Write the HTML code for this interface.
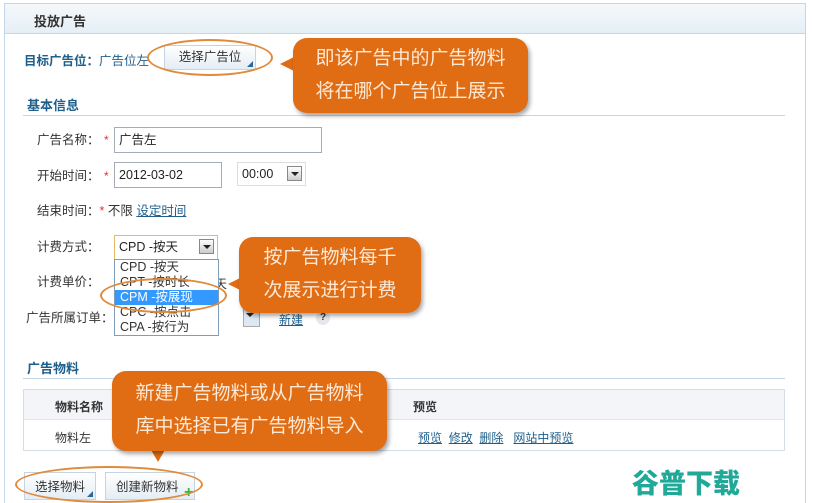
<!DOCTYPE html>
<html style="overflow:hidden;height:503px"><head><meta charset="utf-8"><style>
*{margin:0;padding:0;box-sizing:border-box}
body{width:813px;height:503px;background:#fff;position:relative;overflow:hidden;font-family:"Liberation Sans","Noto Sans CJK SC",sans-serif;font-size:12px;color:#333}
.a{position:absolute}
.panel{left:4px;top:3px;width:802px;height:500px;border:1px solid #c5d7e6;border-bottom:none}
.hdr{left:5px;top:4px;width:800px;height:30px;background:linear-gradient(#f4f8fb,#e6eff6);border-bottom:1px solid #c5d7e6}
.b{font-weight:bold}
.blue{color:#1f5f8b}
.sec{height:22px;border-bottom:1px solid #c5d7e6;font-weight:bold;color:#1f5f8b;padding:1px 0 0 4px;font-size:13px}
.lbl{font-size:12.5px;color:#333;line-height:16px}
.star{color:#d33}
.inp{border:1px solid #a5acb5;background:#fff;padding:0 4px;font-size:12.5px;color:#222}
.btn{border:1px solid #c7d3de;background:linear-gradient(#fff,#e4edf5);font-size:12.5px;text-align:center;color:#333}
.tri{position:absolute;right:2px;bottom:2px;width:0;height:0;border-left:6px solid transparent;border-bottom:6px solid #2a6a9a}
.arrow{width:15px;height:15px;border:1px solid #888;background:linear-gradient(#fff,#ccc)}
.arrow:after{content:"";position:absolute;left:3px;top:5px;border-left:4px solid transparent;border-right:4px solid transparent;border-top:4px solid #222}
.bub{background:#e06c14;border-radius:14px;color:#fde9d6;font-size:19px;line-height:33px;text-align:center;box-shadow:2px 3px 4px rgba(0,0,0,.35)}
.ell{border:2px solid #e08a3a;border-radius:50%}
a{color:#1f5f8b;text-decoration:underline}
</style></head><body>
<div class="a panel"></div>
<div class="a hdr"></div>
<div class="a b" style="left:34px;top:11px;font-size:13px">投放广告</div>
<div class="a b blue" style="left:24px;top:50px;font-size:12.5px">目标广告位：<span style="font-weight:normal">广告位左</span></div>
<div class="a btn" style="left:164px;top:45px;width:92px;height:25px;line-height:23px">选择广告位<span class="tri"></span></div>
<div class="a ell" style="left:147px;top:39px;width:126px;height:37px"></div>

<div class="a sec" style="left:23px;top:94px;width:762px">基本信息</div>
<div class="a lbl" style="left:37px;top:132px">广告名称：</div><div class="a star" style="left:104px;top:133px">*</div>
<div class="a inp" style="left:114px;top:127px;width:208px;height:26px;line-height:24px">广告左</div>
<div class="a lbl" style="left:37px;top:168px">开始时间：</div><div class="a star" style="left:104px;top:169px">*</div>
<div class="a inp" style="left:114px;top:162px;width:108px;height:26px;line-height:24px">2012-03-02</div>
<div class="a inp" style="left:237px;top:162px;width:69px;height:24px;line-height:22px;border-color:#ddd">00:00</div>
<div class="a arrow" style="left:287px;top:166px"></div>
<div class="a lbl" style="left:37px;top:203px">结束时间：<span class="star">*</span> 不限 <a>设定时间</a></div>
<div class="a lbl" style="left:37px;top:239px">计费方式：</div>
<div class="a inp" style="left:114px;top:235px;width:104px;height:25px;line-height:23px;border-color:#e8b86a">CPD -按天</div>
<div class="a arrow" style="left:199px;top:239px"></div>
<div class="a lbl" style="left:37px;top:274px">计费单价：</div>
<div class="a" style="left:215px;top:275px">天</div>
<div class="a lbl" style="left:26px;top:310px">广告所属订单：</div>
<div class="a" style="left:243px;top:305px;width:17px;height:22px;border:1px solid #aaa;background:#dde8f2"></div>
<div class="a" style="left:246px;top:313px;border-left:4px solid transparent;border-right:4px solid transparent;border-top:4px solid #222"></div>
<div class="a" style="left:279px;top:311px"><a>新建</a></div>
<div class="a" style="left:316px;top:311px;width:14px;height:14px;border-radius:50%;background:#e5e9ee;font-size:10px;font-weight:bold;text-align:center;line-height:14px;color:#333">?</div>
<div class="a" style="left:114px;top:259px;width:105px;height:77px;border:1px solid #7f9db9;background:#fff;font-size:12.5px;line-height:15px">
<div style="padding-left:5px">CPD -按天</div><div style="padding-left:5px">CPT -按时长</div><div style="padding-left:5px;background:#3399ff;color:#fff">CPM -按展现</div><div style="padding-left:5px">CPC -按点击</div><div style="padding-left:5px">CPA -按行为</div></div>
<div class="a ell" style="left:100px;top:278px;width:127px;height:35px"></div>

<div class="a sec" style="left:23px;top:357px;width:762px">广告物料</div>
<div class="a" style="left:23px;top:389px;width:762px;height:62px;border:1px solid #d5dee6"></div>
<div class="a" style="left:24px;top:390px;width:760px;height:30px;background:#f3f5f8;border-bottom:1px solid #dde4ea"></div>
<div class="a b" style="left:55px;top:398px">物料名称</div>
<div class="a b" style="left:413px;top:398px">预览</div>
<div class="a" style="left:55px;top:429px">物料左</div>
<div class="a" style="left:418px;top:429px"><a>预览</a>&nbsp; <a>修改</a>&nbsp; <a>删除</a>&nbsp;&nbsp; <a>网站中预览</a></div>
<div class="a btn" style="left:24px;top:472px;width:72px;height:28px;line-height:28px">选择物料<span class="tri"></span></div>
<div class="a btn" style="left:105px;top:472px;width:90px;height:28px;line-height:28px;text-align:left;padding-left:10px">创建新物料</div>
<div class="a" style="left:184px;top:484px;color:#3b3;font-weight:bold;font-size:16px">+</div>
<div class="a ell" style="left:15px;top:466px;width:188px;height:37px"></div>

<div class="a" style="left:280px;top:57px;border-top:7px solid transparent;border-bottom:7px solid transparent;border-right:14px solid #e06c14"></div>
<div class="a bub" style="left:293px;top:38px;width:235px;height:75px;padding-top:4px">即该广告中的广告物料<br>将在哪个广告位上展示</div>
<div class="a" style="left:228px;top:277px;border-top:7px solid transparent;border-bottom:7px solid transparent;border-right:14px solid #e06c14"></div>
<div class="a bub" style="left:239px;top:237px;width:182px;height:76px;padding-top:4px">按广告物料每千<br>次展示进行计费</div>
<div class="a" style="left:150px;top:448px;border-left:8px solid transparent;border-right:8px solid transparent;border-top:14px solid #e06c14"></div>
<div class="a bub" style="left:112px;top:371px;width:275px;height:80px;padding-top:6px">新建广告物料或从广告物料<br>库中选择已有广告物料导入</div>

<div class="a" style="left:632px;top:462px;font-size:27px;font-weight:900;color:#20a898;letter-spacing:0">谷普下载</div>
</body></html>
